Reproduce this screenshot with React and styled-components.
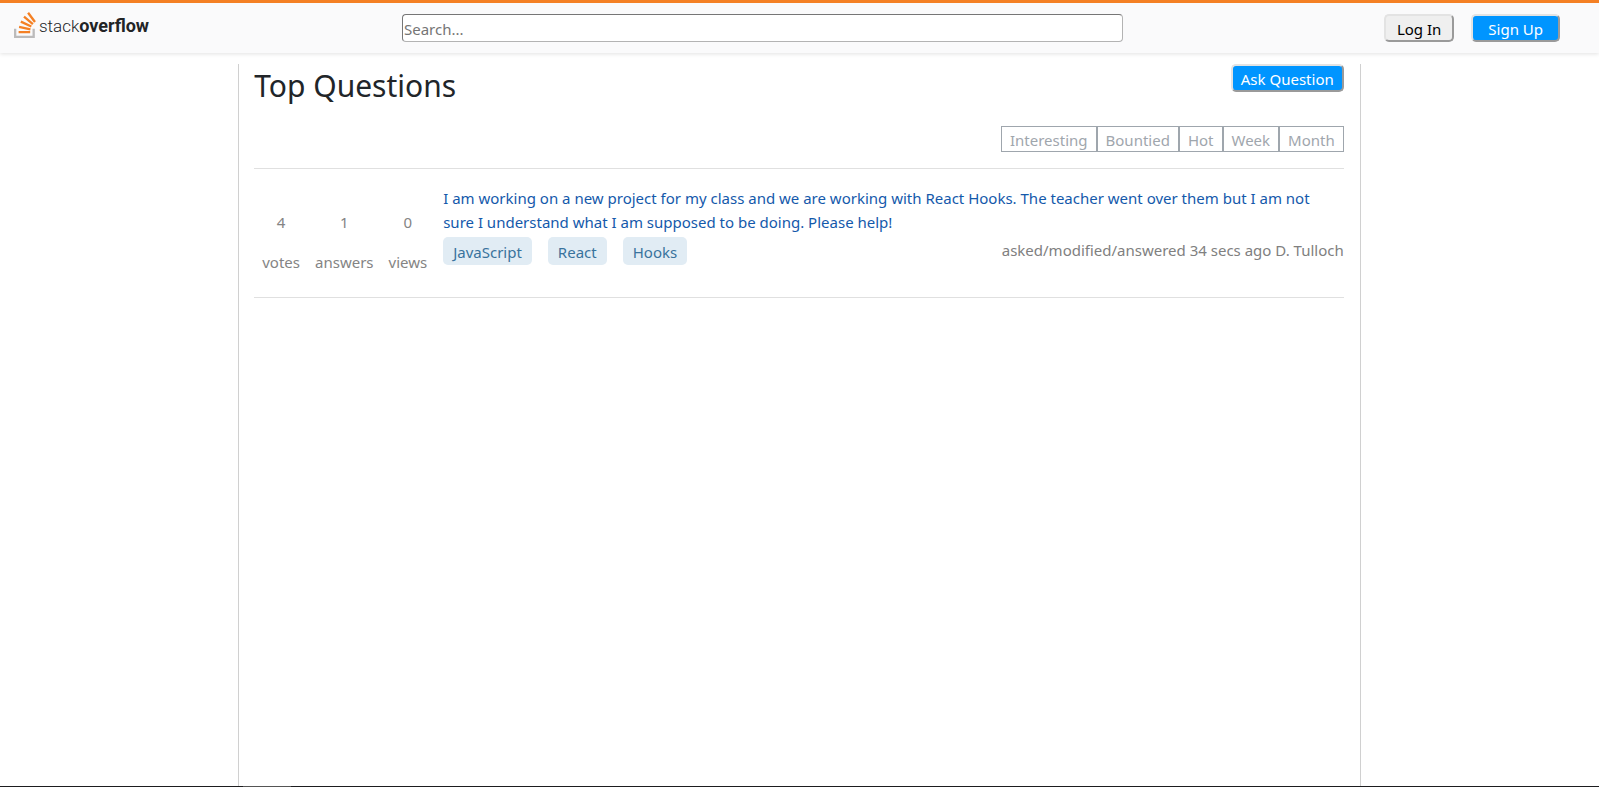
import React from "react";
import styled, { createGlobalStyle } from "styled-components";

const GlobalStyle = createGlobalStyle`
  *, *::before, *::after { box-sizing: border-box; }
  body {
    margin: 0;
    background: #fff;
    color: #212529;
    font: 400 15px/24px "Segoe UI", "Noto Sans", sans-serif;
  }
  button, input { font: inherit; }
`;

const Page = styled.div`
  display: flex;
  flex-direction: column;
  min-height: 100vh;
`;

const Header = styled.header`
  display: grid;
  grid-template-columns: 388fr 721fr 437fr;
  align-items: center;
  height: 53px;
  padding: 0 39px 0 14px;
  border-top: 3px solid #f48024;
  background: #fafafb;
  box-shadow: 0 1px 4px #e2e2e2;
`;

const Logo = styled.a`
  display: flex;
  align-items: center;
  gap: 3px;
  width: max-content;
  padding-bottom: 4px;
  color: #222426;
  font: 300 17px/20px Roboto, sans-serif;
  text-decoration: none;
  svg { margin-bottom: 2px; }
  strong { font-size: 18px; font-weight: 700; }
`;

const SearchForm = styled.form`
  display: flex;
`;

const SearchInput = styled.input`
  width: 100%;
  height: 28px;
  padding: 2px 1px 0;
  border: 1px solid;
  border-color: #767676 #b3b3b3 #b3b3b3 #767676;
  border-radius: 4px;
  background: #fff;
  &::placeholder { color: #757575; }
`;

const HeaderActions = styled.div`
  display: flex;
  justify-content: flex-end;
  gap: 17px;
`;

const Button = styled.button`
  height: 28px;
  padding: 2px ${(p) => p.$pad || 8}px 0;
  border: 2px solid;
  border-color: #e3e3e3 #9a9a9a #9a9a9a #e3e3e3;
  border-radius: 5px;
  background: ${(p) => (p.$primary ? "#0095ff" : "#efefef")};
  color: ${(p) => (p.$primary ? "#fff" : "#000")};
  line-height: 22px;
`;

const Main = styled.main`
  flex: 1;
  width: 70.2%;
  margin: 11px auto 0;
  padding: 0 16px 0 15px;
  border: solid #d0d0d0;
  border-width: 0 1px;
`;

const TitleRow = styled.div`
  display: flex;
  justify-content: space-between;
  align-items: flex-start;
`;

const Title = styled.h1`
  margin: 0;
  font-size: 30px;
  font-weight: 400;
  line-height: 44px;
`;

const Filters = styled.div`
  display: flex;
  justify-content: flex-end;
  padding: 18px 0 16px;
  border-bottom: 1px solid #e0e0e0;
`;

const FilterButton = styled.button`
  height: 26px;
  padding: 2px 8px 0;
  border: 1px solid #9fa6ad;
  background: #fff;
  color: #9fa6ad;
  line-height: 22px;
`;

const Question = styled.article`
  display: flex;
  min-height: 129px;
  padding-top: 17px;
  border-bottom: 1px solid #e0e0e0;
`;

const Stats = styled.div`
  display: flex;
  gap: 15px;
  padding: 24px 16px 0 8px;
  color: #848484;
`;

const Stat = styled.div`
  display: flex;
  flex-direction: column;
  gap: 16px;
  text-align: center;
`;

const Summary = styled.div`
  flex: 1;
`;

const QuestionLink = styled.a`
  display: block;
  padding-right: 16px;
  color: #1459ab;
  text-decoration: none;
`;

const Details = styled.div`
  display: flex;
  justify-content: space-between;
  margin-top: 3px;
`;

const Tags = styled.div`
  display: flex;
  gap: 16px;
`;

const Tag = styled.a`
  padding: 3px 10px 1px;
  border-radius: 5px;
  background: #e1ecf4;
  color: #39739d;
  text-decoration: none;
`;

const Meta = styled.span`
  padding-top: 1px;
  color: #808080;
`;

const BottomEdge = styled.div`
  position: fixed;
  inset: auto 0 0;
  height: 1px;
  background: linear-gradient(90deg, #1d1d1f 243px, #555 243px 291px, #1d1d1f 291px);
`;

const filters = ["Interesting", "Bountied", "Hot", "Week", "Month"];
const stats = [["4", "votes"], ["1", "answers"], ["0", "views"]];
const tags = ["JavaScript", "React", "Hooks"];

function LogoMark() {
  return (
    <svg width="22" height="26" viewBox="22.6 14.9 73.4 86.6" aria-hidden="true">
      <path fill="#bcbbbb" d="M84.4 93.8V70.6h7.7v30.9H22.6V70.6h7.7v23.2z" />
      <path fill="#f48024" d="M38.8 68.4l37.8 7.9 1.6-7.6-37.8-7.9-1.6 7.6zm5-18l35 16.3 3.2-7-35-16.4-3.2 7.1zm9.7-17.2l29.7 24.7 4.9-5.9-29.7-24.7-4.9 5.9zm19.2-18.3l-6.2 4.6 23 31 6.2-4.6-23-31zM38 86h38.6v-7.7H38V86z" />
    </svg>
  );
}

export default function App() {
  return (
    <Page>
      <GlobalStyle />
      <Header>
        <Logo href="#">
          <LogoMark />
          <span>stack<strong>overflow</strong></span>
        </Logo>
        <SearchForm role="search">
          <SearchInput type="text" placeholder="Search..." aria-label="Search" />
        </SearchForm>
        <HeaderActions>
          <Button type="button" $pad={11}>Log In</Button>
          <Button type="button" $primary $pad={15}>Sign Up</Button>
        </HeaderActions>
      </Header>
      <Main>
        <TitleRow>
          <Title>Top Questions</Title>
          <Button type="button" $primary>Ask Question</Button>
        </TitleRow>
        <Filters>
          {filters.map((name) => (
            <FilterButton type="button" key={name}>{name}</FilterButton>
          ))}
        </Filters>
        <Question>
          <Stats>
            {stats.map(([value, label]) => (
              <Stat key={label}>
                <span>{value}</span>
                <span>{label}</span>
              </Stat>
            ))}
          </Stats>
          <Summary>
            <QuestionLink href="#">
              I am working on a new project for my class and we are working with React Hooks. The
              teacher went over them but I am not sure I understand what I am supposed to be doing.
              Please help!
            </QuestionLink>
            <Details>
              <Tags>
                {tags.map((tag) => (
                  <Tag href="#" key={tag}>{tag}</Tag>
                ))}
              </Tags>
              <Meta>asked/modified/answered 34 secs ago D. Tulloch</Meta>
            </Details>
          </Summary>
        </Question>
      </Main>
      <BottomEdge />
    </Page>
  );
}
